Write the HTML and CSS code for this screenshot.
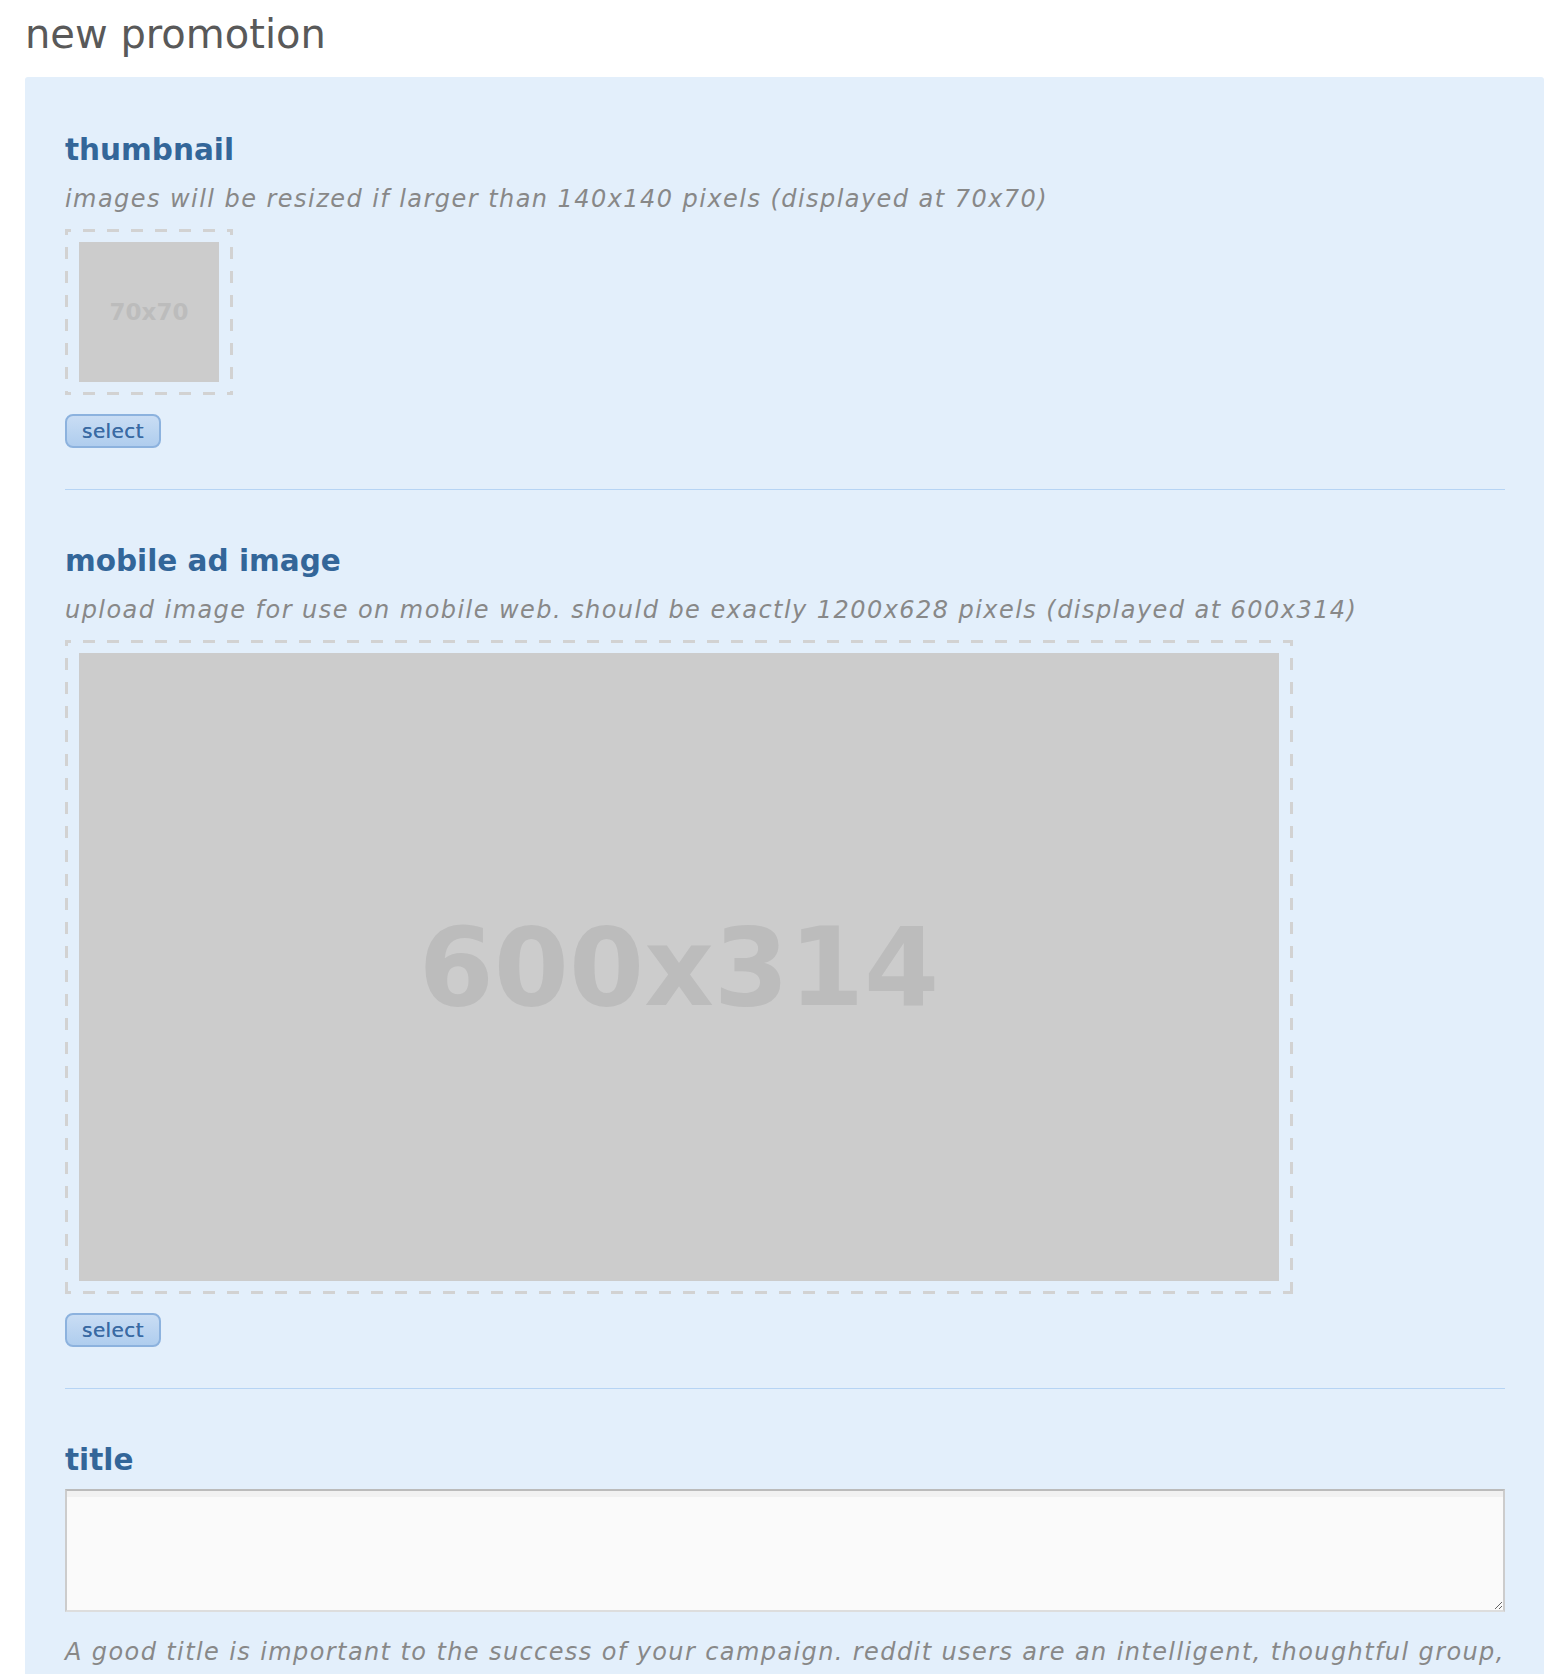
FILE: index.html
```html
<!DOCTYPE html>
<html>
<head>
<meta charset="utf-8">
<title>new promotion</title>
<link rel="stylesheet" href="styles.css">
</head>
<body>
<div class="page">
  <h1 class="page-title">new promotion</h1>
  <div class="panel">
    <section class="field">
      <h2 class="field-title">thumbnail</h2>
      <p class="field-desc">images will be resized if larger than 140x140 pixels (displayed at 70x70)</p>
      <div class="drop-box">
        <div class="placeholder thumb"><span class="ph-label small">70x70</span></div>
      </div>
      <button class="select-btn" type="button">select</button>
    </section>
    <section class="field">
      <h2 class="field-title">mobile ad image</h2>
      <p class="field-desc">upload image for use on mobile web. should be exactly 1200x628 pixels (displayed at 600x314)</p>
      <div class="drop-box">
        <div class="placeholder ad"><span class="ph-label big">600x314</span></div>
      </div>
      <button class="select-btn" type="button">select</button>
    </section>
    <section class="field last">
      <h2 class="field-title">title</h2>
      <textarea class="title-input"></textarea>
      <p class="field-desc note">A good title is important to the success of your campaign. reddit users are an intelligent, thoughtful group, and will respond best to titles that are honest, clear and interesting.</p>
    </section>
  </div>
</div>
</body>
</html>
```

FILE: styles.css
```css
html, body {
  margin: 0;
  padding: 0;
  background: #ffffff;
}

.page {
  padding: 0 24px 40px 25px;
  font-family: "DejaVu Sans", Verdana, sans-serif;
}

.page-title {
  margin: 10px 0 19px;
  font-size: 40px;
  line-height: 48px;
  font-weight: normal;
  color: #595959;
}

.panel {
  background: #e3effb;
  border-radius: 3px;
  padding: 2px 39px 40px 40px;
}

.field {
  padding: 53px 0 41px;
  border-bottom: 1px solid #b6d4f4;
}

.field.last {
  border-bottom: none;
}

.field-title {
  margin: 0;
  font-size: 29.5px;
  line-height: 36px;
  font-weight: bold;
  color: #336699;
}

.field-desc {
  margin: 17px 0 0;
  font-size: 24px;
  line-height: 28px;
  font-style: italic;
  letter-spacing: 1.45px;
  color: #888888;
}

.drop-box {
  display: inline-block;
  margin-top: 16px;
  padding: 13px 14px;
  background:
    repeating-linear-gradient(to right, #d2d2d2 0 6px, transparent 6px 18px, #d2d2d2 18px 24px) left top / 100% 3px no-repeat,
    repeating-linear-gradient(to right, #d2d2d2 0 6px, transparent 6px 18px, #d2d2d2 18px 24px) left bottom / 100% 3px no-repeat,
    repeating-linear-gradient(to bottom, #d2d2d2 0 6px, transparent 6px 18px, #d2d2d2 18px 24px) left top / 3px 100% no-repeat,
    repeating-linear-gradient(to bottom, #d2d2d2 0 6px, transparent 6px 18px, #d2d2d2 18px 24px) right top / 3px 100% no-repeat;
}

.placeholder {
  display: flex;
  align-items: center;
  justify-content: center;
  background: #cccccc;
}

.placeholder.thumb {
  width: 140px;
  height: 140px;
}

.placeholder.ad {
  width: 1200px;
  height: 628px;
}

.ph-label {
  color: #bcbcbc;
  font-weight: bold;
}

.ph-label.small {
  font-size: 23px;
}

.ph-label.big {
  font-size: 108px;
}

.select-btn {
  display: block;
  margin-top: 19px;
  width: 96px;
  height: 34px;
  box-sizing: border-box;
  padding: 0;
  border: 2px solid #8cb2de;
  border-radius: 8px;
  background: linear-gradient(#c9ddf4, #afcdee);
  color: #3a6aa3;
  font-family: "DejaVu Sans", Verdana, sans-serif;
  font-size: 20px;
  font-weight: normal;
  letter-spacing: 0.4px;
  line-height: 30px;
  text-align: center;
  text-shadow: 0 0 0.6px #3a6aa3;
}

.title-input {
  display: block;
  margin-top: 11px;
  width: 100%;
  height: 123px;
  box-sizing: border-box;
  border-style: solid;
  border-width: 2px;
  border-color: #bbbbbb #cccccc #dddddd #cccccc;
  background: #fafafa;
  box-shadow: inset 0 6px 0 #f1f1f1;
  font-family: "DejaVu Sans", Verdana, sans-serif;
  font-size: 20px;
}

.field-desc.note {
  margin-top: 18px;
  line-height: 44px;
  letter-spacing: 1.4px;
}
```
